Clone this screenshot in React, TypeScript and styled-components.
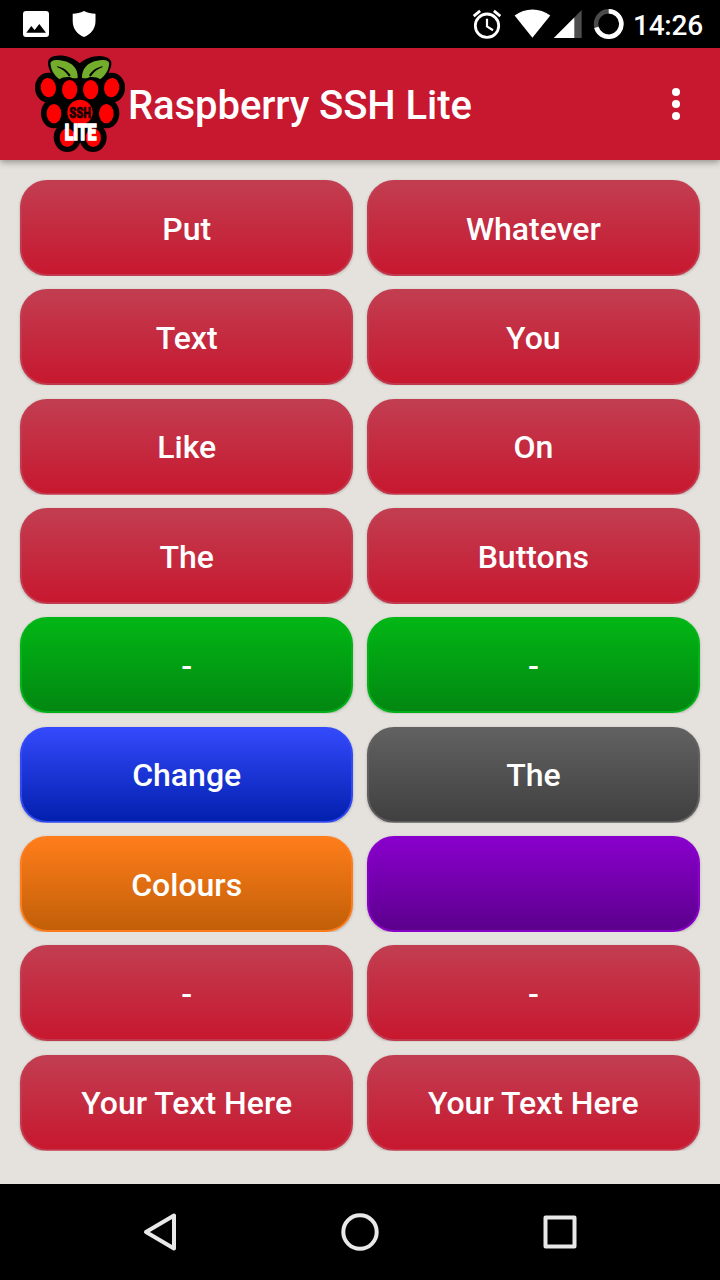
import React from "react";
import styled, { createGlobalStyle } from "styled-components";

const GlobalStyle = createGlobalStyle`
  * { box-sizing: border-box; }
  body {
    margin: 0;
    background: #e5e2dd;
    font-family: Roboto, "Liberation Sans", sans-serif;
  }
`;

const Screen = styled.div`
  width: 720px;
  height: 1280px;
  display: flex;
  flex-direction: column;
  overflow: hidden;
  background: #e5e2dd;
`;

const StatusBar = styled.header`
  height: 48px;
  flex: none;
  display: flex;
  align-items: center;
  justify-content: space-between;
  padding: 0 16px 0 20px;
  background: #000;
  color: #fff;
`;

const StatusGroup = styled.div`
  display: flex;
  align-items: center;
`;

const Clock = styled.span`
  width: 71px;
  margin-left: 9px;
  font-size: 28px;
  font-weight: 500;
  letter-spacing: -0.25px;
  line-height: 48px;
  padding-top: 3px;
  white-space: nowrap;
`;

const AppBar = styled.div`
  height: 112px;
  flex: none;
  display: flex;
  align-items: center;
  padding: 0 20px 0 25px;
  background: #c7182f;
  color: #fff;
  box-shadow: 0 2px 7px rgba(0, 0, 0, 0.38);
`;

const Title = styled.h1`
  flex: 1;
  margin: 0;
  padding: 3px 0 0;
  margin-left: -7px;
  font-size: 40px;
  font-weight: 500;
  letter-spacing: -0.08px;
  line-height: 48px;
  white-space: nowrap;
`;

const MenuButton = styled.button`
  width: 48px;
  height: 96px;
  padding: 0;
  border: 0;
  background: none;
  display: flex;
  flex-direction: column;
  align-items: center;
  justify-content: center;
  gap: 4px;
`;

const Dot = styled.span`
  width: 8px;
  height: 8px;
  border-radius: 50%;
  background: #fff;
`;

const ButtonGrid = styled.main`
  flex: 1;
  display: grid;
  grid-template-columns: 1fr 1fr;
  grid-auto-rows: 96px;
  gap: 13.35px;
  padding: 20px 20px 0;
`;

const Cell = styled.div`
  display: flex;
  clip-path: inset(-3px -4px 0 -4px);
`;

const CommandButton = styled.button<{ $top: string; $bottom: string; $edge: string }>`
  flex: 1;
  padding: 1px 0 0;
  border: 2px solid transparent;
  border-radius: 27px;
  background:
    linear-gradient(${(p) => p.$top}, ${(p) => p.$bottom}) padding-box,
    linear-gradient(${(p) => p.$top}, ${(p) => p.$edge}) border-box;
  box-shadow: 0 1px 3px rgba(0, 0, 0, 0.22);
  color: #fff;
  font-family: inherit;
  font-size: 32px;
  font-weight: 500;
`;

const NavBar = styled.nav`
  height: 96px;
  flex: none;
  display: flex;
  align-items: center;
  justify-content: center;
  gap: 152px;
  background: #000;
`;

const palette = {
  red: { top: "#c23d50", bottom: "#c7182f", edge: "#c2384c" },
  green: { top: "#02b615", bottom: "#028811", edge: "#02b119" },
  blue: { top: "#3349fb", bottom: "#0220ae", edge: "#3048ef" },
  grey: { top: "#616161", bottom: "#404040", edge: "#5e5e5e" },
  orange: { top: "#ff7d1a", bottom: "#c15f08", edge: "#fc7b1b" },
  purple: { top: "#8900cc", bottom: "#5c008d", edge: "#8900c8" },
};

const buttons: { label: string; color: keyof typeof palette }[] = [
  { label: "Put", color: "red" },
  { label: "Whatever", color: "red" },
  { label: "Text", color: "red" },
  { label: "You", color: "red" },
  { label: "Like", color: "red" },
  { label: "On", color: "red" },
  { label: "The", color: "red" },
  { label: "Buttons", color: "red" },
  { label: "-", color: "green" },
  { label: "-", color: "green" },
  { label: "Change", color: "blue" },
  { label: "The", color: "grey" },
  { label: "Colours", color: "orange" },
  { label: "", color: "purple" },
  { label: "-", color: "red" },
  { label: "-", color: "red" },
  { label: "Your Text Here", color: "red" },
  { label: "Your Text Here", color: "red" },
];

const NotificationIcons = () => (
  <svg width="80" height="48" viewBox="20 0 80 48" fill="#fff">
    <path
      fillRule="evenodd"
      d="M26 11h20q3 0 3 3v20q0 3-3 3H26q-3 0-3-3V14q0-3 3-3zM26.300 32.700h19.700l-6.700-8.800-4.700 6-3.300-4z"
    />
    <path d="M84 11C80 12.800 77 13.700 72.700 13.700V21C72.700 29 77.500 34.500 84 37C90.500 34.500 95.500 29 95.500 21V13.700C91 13.700 88 12.800 84 11z" />
  </svg>
);

const SystemIcons = () => (
  <svg width="154" height="48" viewBox="470 0 154 48" fill="none">
    <circle cx="487" cy="25.700" r="11.700" stroke="#fff" strokeWidth="2.800" />
    <path d="M487 18.700v7.800l6 3.700" stroke="#fff" strokeWidth="2.200" />
    <path d="M473.700 16.200l6.400-5.300M500.300 16.200l-6.400-5.300" stroke="#fff" strokeWidth="2.800" />
    <path d="M532.400 37.700L514.600 15.600C525 7.500 540 7.500 550.300 15.600z" fill="#fff" />
    <path d="M553.800 38L581.700 10V38z" fill="#4d4d4d" />
    <path d="M553.800 38L574.300 17.400V38z" fill="#fff" />
    <circle cx="608.700" cy="24" r="12.700" stroke="#4a4a4a" strokeWidth="4.400" />
    <path d="M608.700 11.300A12.700 12.700 0 1 1 596.400 27.300" stroke="#fff" strokeWidth="4.600" />
  </svg>
);

const RaspberryLogo = () => (
  <svg width="110" height="112" viewBox="0 0 330 336">
    <g fill="#000">
      <path d="M164 46C140 22 96 16 76 29C64 37 70 57 75 68L85 105H245L253 68C260 56 264 38 249 30C228 17 187 25 164 46z" />
      <ellipse cx="70" cy="119" rx="40" ry="45" />
      <ellipse cx="260" cy="119" rx="40" ry="45" />
      <ellipse cx="87" cy="196" rx="39" ry="45" />
      <ellipse cx="244" cy="196" rx="39" ry="45" />
      <ellipse cx="127" cy="268" rx="41" ry="44" />
      <ellipse cx="204" cy="268" rx="41" ry="44" />
      <path d="M80 92H250L262 175L220 266H109L68 175z" />
    </g>
    <g fill="#73ad2b">
      <path d="M77 51C72 36 95 34 113 38C143 43 160 63 158 90C148 92 141 91 135 87C122 86 110 88 104 94C89 84 79 68 77 51z" />
      <path d="M252 51C257 36 234 34 216 38C187 43 170 63 171 90C181 92 188 91 194 87C207 86 219 88 225 94C240 84 250 68 252 51z" />
    </g>
    <path
      d="M96 55C114 58 127 68 137 82L132 86C123 72 112 63 96 57zM233 55C215 58 202 68 192 82L197 86C206 72 217 63 233 57z"
      fill="#000"
    />
    <g fill="#f00">
      <ellipse cx="70" cy="119" rx="23" ry="29" transform="rotate(-8 70 119)" />
      <ellipse cx="134" cy="125" rx="23" ry="29" />
      <ellipse cx="197" cy="125" rx="23" ry="29" />
      <ellipse cx="260" cy="119" rx="23" ry="29" transform="rotate(8 260 119)" />
      <ellipse cx="87" cy="197" rx="22" ry="29" />
      <ellipse cx="244" cy="197" rx="22" ry="29" />
      <circle cx="165" cy="193" r="38" />
      <ellipse cx="127" cy="269" rx="23" ry="28" />
      <ellipse cx="205" cy="269" rx="23" ry="28" />
    </g>
    <g fontFamily="Roboto, 'Liberation Sans', sans-serif" fontWeight="900">
      <text
        x="133"
        y="210"
        fontSize="43"
        textLength="65"
        lengthAdjust="spacingAndGlyphs"
        fill="#160000"
        stroke="#160000"
        strokeWidth="2"
      >
        SSH
      </text>
      <text
        x="119"
        y="275"
        fontSize="67"
        textLength="95"
        lengthAdjust="spacingAndGlyphs"
        fill="#fff"
        stroke="#fff"
        strokeWidth="5"
      >
        LITE
      </text>
    </g>
  </svg>
);

const BackIcon = () => (
  <svg width="48" height="48" viewBox="136 1208 48 48">
    <path d="M174 1215.500V1248.500L146 1232z" fill="none" stroke="#e9e9e9" strokeWidth="4" strokeLinejoin="round" />
  </svg>
);

const HomeIcon = () => (
  <svg width="48" height="48" viewBox="0 0 48 48">
    <circle cx="24" cy="24" r="16.700" fill="none" stroke="#e9e9e9" strokeWidth="4" />
  </svg>
);

const RecentsIcon = () => (
  <svg width="48" height="48" viewBox="0 0 48 48">
    <rect x="9.500" y="9.500" width="29" height="29" fill="none" stroke="#e9e9e9" strokeWidth="4" strokeLinejoin="round" />
  </svg>
);

export default function App() {
  return (
    <>
      <GlobalStyle />
      <Screen>
        <StatusBar>
          <NotificationIcons />
          <StatusGroup>
            <SystemIcons />
            <Clock>14:26</Clock>
          </StatusGroup>
        </StatusBar>
        <AppBar>
          <RaspberryLogo />
          <Title>Raspberry SSH Lite</Title>
          <MenuButton aria-label="More options">
            <Dot />
            <Dot />
            <Dot />
          </MenuButton>
        </AppBar>
        <ButtonGrid>
          {buttons.map(({ label, color }, index) => (
            <Cell key={index}>
              <CommandButton $top={palette[color].top} $bottom={palette[color].bottom} $edge={palette[color].edge}>
                {label}
              </CommandButton>
            </Cell>
          ))}
        </ButtonGrid>
        <NavBar>
          <BackIcon />
          <HomeIcon />
          <RecentsIcon />
        </NavBar>
      </Screen>
    </>
  );
}
